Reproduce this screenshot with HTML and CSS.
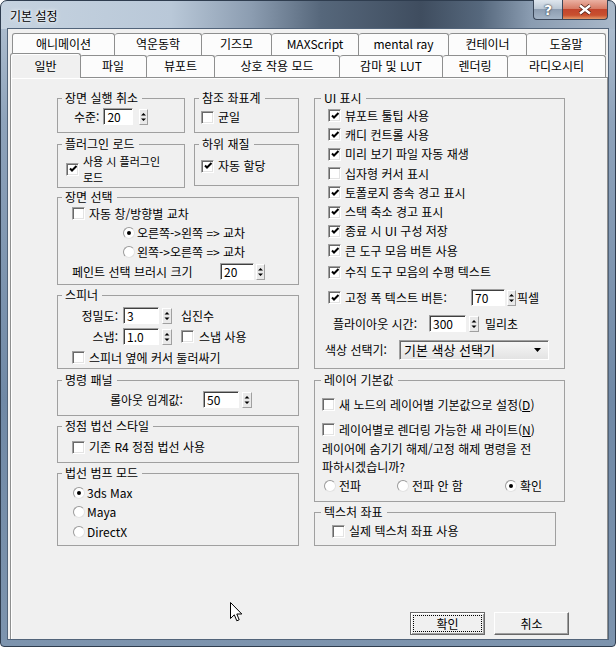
FILE: index.html
```html
<!DOCTYPE html>
<html lang="ko">
<head>
    <meta charset="UTF-8">
    <title>기본 설정</title>
    <link rel="stylesheet" href="styles.css">
</head>
<body>
<div class="window">
    <div class="titlebar">
        <span class="title">기본 설정</span>
        <div class="caption">
            <div class="cap-btn cap-help">?</div>
            <div class="cap-btn cap-close">
                <svg width="14" height="11" viewBox="0 0 14 11"><path d="M2 1.5 L12 9.5 M12 1.5 L2 9.5" stroke="#4a1d12" stroke-width="4"/><path d="M2 1.5 L12 9.5 M12 1.5 L2 9.5" stroke="#fff" stroke-width="2.4"/></svg>
            </div>
        </div>
    </div>

    <div class="client">
        <div class="tabs">
            <div class="tab-row row-back">
                <div class="tab">애니메이션</div>
                <div class="tab">역운동학</div>
                <div class="tab">기즈모</div>
                <div class="tab">MAXScript</div>
                <div class="tab">mental ray</div>
                <div class="tab">컨테이너</div>
                <div class="tab">도움말</div>
            </div>
            <div class="tab-row row-front">
                <div class="tab active">일반</div>
                <div class="tab">파일</div>
                <div class="tab">뷰포트</div>
                <div class="tab">상호 작용 모드</div>
                <div class="tab">감마 및 LUT</div>
                <div class="tab">렌더링</div>
                <div class="tab">라디오시티</div>
            </div>
        </div>

        <div class="page">
            <div class="cols">
                <!-- left column -->
                <div class="col col-left">
                    <div class="pair">
                        <div class="group g-undo">
                            <div class="group-title">장면 실행 취소</div>
                            <div class="line undo-row">
                                <span>수준:</span>
                                <span class="spin-box w30">20</span>
                                <span class="spin-arr"><svg width="7" height="14"><path d="M1 5.5 L3.5 3 L6 5.5Z M1 8.5 L3.5 11 L6 8.5Z"/></svg></span>
                            </div>
                        </div>
                        <div class="group g-ref">
                            <div class="group-title">참조 좌표계</div>
                            <div class="opt ref-row"><span class="cb"></span>균일</div>
                        </div>
                    </div>

                    <div class="pair pair-2">
                        <div class="group g-plugin">
                            <div class="group-title">플러그인 로드</div>
                            <div class="opt plugin-row">
                                <span class="cb"><svg width="9" height="9"><path d="M1 3.5 L3 5.5 L7.5 1" fill="none" stroke="#000" stroke-width="2"/></svg></span>
                                <span class="two-line">사용 시 플러그인<br>로드</span>
                            </div>
                        </div>
                        <div class="group g-submtl">
                            <div class="group-title">하위 재질</div>
                            <div class="opt submtl-row"><span class="cb"><svg width="9" height="9"><path d="M1 3.5 L3 5.5 L7.5 1" fill="none" stroke="#000" stroke-width="2"/></svg></span>자동 할당</div>
                        </div>
                    </div>

                    <div class="group g-select">
                        <div class="group-title">장면 선택</div>
                        <div class="opt sel-row pl14"><span class="cb"></span>자동 창/방향별 교차</div>
                        <div class="opt sel-row radio-row"><span class="rb on"></span>오른쪽-&gt;왼쪽 =&gt; 교차</div>
                        <div class="opt sel-row radio-row"><span class="rb"></span>왼쪽-&gt;오른쪽 =&gt; 교차</div>
                        <div class="line brush-row">
                            <span class="brush-label">페인트 선택 브러시 크기</span>
                            <span class="spin-box w34">20</span>
                            <span class="spin-arr"><svg width="7" height="14"><path d="M1 5.5 L3.5 3 L6 5.5Z M1 8.5 L3.5 11 L6 8.5Z"/></svg></span>
                        </div>
                    </div>

                    <div class="group g-spinner">
                        <div class="group-title">스피너</div>
                        <div class="line spinner-row first">
                            <span class="spin-label">정밀도:</span>
                            <span class="spin-box w36">3</span>
                            <span class="spin-arr wide"><svg width="8" height="14"><path d="M1.5 5.5 L4 3 L6.5 5.5Z M1.5 8.5 L4 11 L6.5 8.5Z"/></svg></span>
                            <span class="after">십진수</span>
                        </div>
                        <div class="line spinner-row">
                            <span class="spin-label">스냅:</span>
                            <span class="spin-box w36">1.0</span>
                            <span class="spin-arr wide"><svg width="8" height="14"><path d="M1.5 5.5 L4 3 L6.5 5.5Z M1.5 8.5 L4 11 L6.5 8.5Z"/></svg></span>
                            <span class="opt after"><span class="cb"></span>스냅 사용</span>
                        </div>
                        <div class="opt spinner-row pl14"><span class="cb"></span>스피너 옆에 커서 둘러싸기</div>
                    </div>

                    <div class="group g-cmd">
                        <div class="group-title">명령 패널</div>
                        <div class="line cmd-row">
                            <span class="cmd-label">롤아웃 임계값:</span>
                            <span class="spin-box w36">50</span>
                            <span class="spin-arr wide"><svg width="8" height="14"><path d="M1.5 5.5 L4 3 L6.5 5.5Z M1.5 8.5 L4 11 L6.5 8.5Z"/></svg></span>
                        </div>
                    </div>

                    <div class="group g-vnormal">
                        <div class="group-title">정점 법선 스타일</div>
                        <div class="opt vnormal-row pl14"><span class="cb"></span>기존 R4 정점 법선 사용</div>
                    </div>

                    <div class="group g-bump">
                        <div class="group-title">법선 범프 모드</div>
                        <div class="opt bump-row first"><span class="rb on"></span>3ds Max</div>
                        <div class="opt bump-row"><span class="rb"></span>Maya</div>
                        <div class="opt bump-row"><span class="rb"></span>DirectX</div>
                    </div>
                </div>

                <!-- right column -->
                <div class="col col-right">
                    <div class="group g-ui">
                        <div class="group-title">UI 표시</div>
                        <div class="ui-list">
                            <div class="opt ui-row"><span class="cb"><svg width="9" height="9"><path d="M1 3.5 L3 5.5 L7.5 1" fill="none" stroke="#000" stroke-width="2"/></svg></span>뷰포트 툴팁 사용</div>
                            <div class="opt ui-row"><span class="cb"><svg width="9" height="9"><path d="M1 3.5 L3 5.5 L7.5 1" fill="none" stroke="#000" stroke-width="2"/></svg></span>캐디 컨트롤 사용</div>
                            <div class="opt ui-row"><span class="cb"><svg width="9" height="9"><path d="M1 3.5 L3 5.5 L7.5 1" fill="none" stroke="#000" stroke-width="2"/></svg></span>미리 보기 파일 자동 재생</div>
                            <div class="opt ui-row"><span class="cb"></span>십자형 커서 표시</div>
                            <div class="opt ui-row"><span class="cb"><svg width="9" height="9"><path d="M1 3.5 L3 5.5 L7.5 1" fill="none" stroke="#000" stroke-width="2"/></svg></span>토폴로지 종속 경고 표시</div>
                            <div class="opt ui-row"><span class="cb"><svg width="9" height="9"><path d="M1 3.5 L3 5.5 L7.5 1" fill="none" stroke="#000" stroke-width="2"/></svg></span>스택 축소 경고 표시</div>
                            <div class="opt ui-row"><span class="cb"><svg width="9" height="9"><path d="M1 3.5 L3 5.5 L7.5 1" fill="none" stroke="#000" stroke-width="2"/></svg></span>종료 시 UI 구성 저장</div>
                            <div class="opt ui-row"><span class="cb"><svg width="9" height="9"><path d="M1 3.5 L3 5.5 L7.5 1" fill="none" stroke="#000" stroke-width="2"/></svg></span>큰 도구 모음 버튼 사용</div>
                            <div class="opt ui-row last"><span class="cb"><svg width="9" height="9"><path d="M1 3.5 L3 5.5 L7.5 1" fill="none" stroke="#000" stroke-width="2"/></svg></span>수직 도구 모음의 수평 텍스트</div>
                        </div>
                        <div class="line ui-wide fixed-row">
                            <span class="cb"><svg width="9" height="9"><path d="M1 3.5 L3 5.5 L7.5 1" fill="none" stroke="#000" stroke-width="2"/></svg></span>
                            <span class="fixed-label">고정 폭 텍스트 버튼:</span>
                            <span class="spin-box w34">70</span>
                            <span class="spin-arr"><svg width="7" height="14"><path d="M1 5.5 L3.5 3 L6 5.5Z M1 8.5 L3.5 11 L6 8.5Z"/></svg></span>
                            <span class="unit-px">픽셀</span>
                        </div>
                        <div class="line ui-wide flyout-row">
                            <span class="flyout-label">플라이아웃 시간:</span>
                            <span class="spin-box w37">300</span>
                            <span class="spin-arr wide"><svg width="8" height="14"><path d="M1.5 5.5 L4 3 L6.5 5.5Z M1.5 8.5 L4 11 L6.5 8.5Z"/></svg></span>
                            <span class="unit-ms">밀리초</span>
                        </div>
                        <div class="line ui-wide color-row">
                            <span class="color-label">색상 선택기:</span>
                            <div class="combo">
                                <span>기본 색상 선택기</span>
                                <svg class="combo-arrow" width="7" height="4"><path d="M0 0 H7 L3.5 4Z"/></svg>
                            </div>
                        </div>
                    </div>

                    <div class="group g-layer">
                        <div class="group-title">레이어 기본값</div>
                        <div class="opt layer-row first"><span class="cb"></span><span>새 노드의 레이어별 기본값으로 설정(<u>D</u>)</span></div>
                        <div class="opt layer-row"><span class="cb"></span><span>레이어별로 렌더링 가능한 새 라이트(<u>N</u>)</span></div>
                        <p class="layer-text">레이어에 숨기기 해제/고정 해제 명령을 전<br>파하시겠습니까?</p>
                        <div class="layer-radios">
                            <span class="opt r-prop"><span class="rb"></span>전파</span>
                            <span class="opt r-noprop"><span class="rb"></span>전파 안 함</span>
                            <span class="opt"><span class="rb on"></span>확인</span>
                        </div>
                    </div>

                    <div class="group g-tex">
                        <div class="group-title">텍스처 좌표</div>
                        <div class="opt tex-row"><span class="cb"></span>실제 텍스처 좌표 사용</div>
                    </div>
                </div>
            </div>

            <div class="buttons">
                <button class="btn btn-default"><span class="focus">확인</span></button>
                <button class="btn">취소</button>
            </div>
        </div>
    </div>

    <svg class="cursor" width="13" height="21" viewBox="0 0 13 21"><path d="M0.5 0.5 V16.5 L4.3 12.8 L6.8 18.8 L9.2 17.8 L6.8 12 H11.8 Z" fill="#fff" stroke="#000" stroke-linejoin="round"/></svg>
</div>
</body>
</html>
```

FILE: styles.css
```css
* {
  box-sizing: border-box;
}

body {
  margin: 0;
  font-family: "Noto Sans CJK KR", "Noto Sans", sans-serif;
  font-size: 12px;
  color: #000;
  background: #fff;
}

/* window frame */
.window {
  position: relative;
  width: 616px;
  height: 647px;
  display: flex;
  flex-direction: column;
  border: 1px solid #2f3d4f;
  border-radius: 7px 7px 4px 4px;
  padding: 0 6px 6px;
  background:
    linear-gradient(90deg, #c6d3e0 0, #b9c8d8 170px, #8c9db1 250px, #56677b 320px, #3f4d5f 420px, #56687d 480px, #8a9cb1 530px, #aab9ca 616px) top / 100% 28px no-repeat,
    linear-gradient(180deg, #b4c3d3 0, #8ea3bb 120px, #7089a6 400px, #7d94ae 100%);
}

.titlebar {
  height: 27px;
  display: flex;
  align-items: flex-start;
  padding-left: 3px;
}

.title {
  margin-top: 7px;
  line-height: 16px;
  text-shadow: 0 0 5px #fff, 0 0 3px #fff;
}

.caption {
  display: flex;
  margin: -1px 1px 0 auto;
}

.cap-btn {
  height: 20px;
  display: flex;
  align-items: center;
  justify-content: center;
  border: 1px solid #3a4658;
  border-top: none;
}

.cap-help {
  width: 29px;
  border-right: none;
  border-radius: 0 0 0 4px;
  background: linear-gradient(#dfe6ee, #bcc8d5 45%, #8d9db1 50%, #a4b4c6);
  color: #fff;
  font: bold 14px "DejaVu Sans", sans-serif;
  text-shadow: 0 0 2px #27313f, 0 0 1px #27313f;
}

.cap-close {
  width: 46px;
  border-radius: 0 0 4px 0;
  background: linear-gradient(#eab1a2, #d77c66 45%, #c2452c 50%, #c9502f 80%, #e39868);
}

.client {
  flex: 1;
  display: flex;
  flex-direction: column;
  border: 1px solid #52647a;
  background: #f0f0f0;
}

/* tabs */
.tabs {
  padding: 4px 0 0 4px;
}

.tab-row {
  display: flex;
  height: 22px;
}

.tab {
  flex: none;
  height: 22px;
  border: 1px solid #8e8f8f;
  border-left: none;
  border-bottom: none;
  border-radius: 3px 3px 0 0;
  background: #fcfcfc;
  text-align: center;
  line-height: 20px;
  white-space: nowrap;
}

.tab:first-child {
  border-left: 1px solid #8e8f8f;
}

.row-back .tab:nth-child(1) { width: 103px; }
.row-back .tab:nth-child(2) { width: 87px; }
.row-back .tab:nth-child(3) { width: 70px; }
.row-back .tab:nth-child(4) { width: 87px; }
.row-back .tab:nth-child(5) { width: 90px; }
.row-back .tab:nth-child(6) { width: 78px; }
.row-back .tab:nth-child(7) { width: 79px; }

.row-front .tab:nth-child(1) { width: 68px; }
.row-front .tab:nth-child(2) { width: 67px; }
.row-front .tab:nth-child(3) { width: 68px; }
.row-front .tab:nth-child(4) { width: 125px; }
.row-front .tab:nth-child(5) { width: 103px; }
.row-front .tab:nth-child(6) { width: 65px; }
.row-front .tab:nth-child(7) { width: 98px; }

.row-front .tab.active {
  position: relative;
  z-index: 1;
  width: 71px;
  height: 25px;
  margin: -2px -1px -1px -2px;
  background: #f0f0f0;
  box-shadow: inset 1px 1px #fff;
  line-height: 24px;
}

.page {
  flex: 1;
  display: flex;
  flex-direction: column;
  margin-left: 2px;
  border: 1px solid #8e8f8f;
  border-bottom: none;
  box-shadow: inset 1px 1px #fff;
  padding: 20px 38px 4px 46px;
}

.cols {
  display: flex;
  align-items: flex-start;
  gap: 15px;
}

.col-left { width: 242px; }
.col-right { width: 251px; }

/* group boxes */
.group {
  border: 1px solid #a0a0a0;
}

.group-title {
  width: fit-content;
  height: 14px;
  margin: -8px 0 0 4px;
  padding: 0 4px 0 3px;
  background: #f0f0f0;
  line-height: 14px;
  white-space: nowrap;
}

.col-right .group-title {
  margin-left: 6px;
}

.pair {
  display: flex;
  align-items: flex-start;
  gap: 9px;
}

.pair-2 { margin-top: 11px; }

.g-undo { width: 128px; height: 35px; }
.g-ref { width: 105px; height: 35px; }
.g-plugin { width: 128px; height: 44px; }
.g-submtl { width: 105px; height: 42px; }
.g-select { height: 88px; margin-top: 9px; }
.g-spinner { height: 74px; margin-top: 10px; }
.g-cmd { height: 36px; margin-top: 11px; }
.g-vnormal { height: 37px; margin-top: 10px; }
.g-bump { height: 73px; margin-top: 10px; }

.g-ui { height: 271px; }
.g-layer { height: 122px; margin-top: 11px; }
.g-tex { width: 242px; height: 34px; margin-top: 10px; }

/* controls */
.line {
  display: flex;
  align-items: center;
  white-space: nowrap;
}

.opt {
  display: flex;
  align-items: center;
  gap: 4px;
  white-space: nowrap;
  line-height: 14px;
}

.cb {
  flex: none;
  width: 13px;
  height: 13px;
  display: flex;
  align-items: center;
  justify-content: center;
  border: 1px solid;
  border-color: #a0a0a0 #fff #fff #a0a0a0;
  box-shadow: inset 1px 1px #696969, inset -1px -1px #e3e3e3;
  background: #fff;
}

.cb svg {
  margin: 1px 0 0 1px;
}

.rb {
  flex: none;
  position: relative;
  width: 12px;
  height: 12px;
  border-radius: 50%;
  border: 1px solid;
  border-color: #9a9a9a #e2e2e2 #e2e2e2 #9a9a9a;
  background: #fff;
  margin-right: -1px;
}

.rb.on::after {
  content: "";
  position: absolute;
  left: 3px;
  top: 3px;
  width: 4px;
  height: 4px;
  border-radius: 50%;
  background: #000;
}

.spin-box {
  flex: none;
  height: 17px;
  padding-left: 3px;
  line-height: 15px;
  border: 1px solid;
  border-color: #a0a0a0 #fff #fff #a0a0a0;
  box-shadow: inset 1px 1px #404040;
  background: #fff;
}

.w30 { width: 30px; }
.w34 { width: 34px; }
.w36 { width: 36px; }
.w37 { width: 37px; }

.spin-arr {
  flex: none;
  display: flex;
  width: 9px;
  height: 16px;
  margin-left: 2px;
  border: 1px solid;
  border-color: #fff #a0a0a0 #a0a0a0 #fff;
  background: #e9e9e9;
}

.spin-arr.wide {
  width: 10px;
  margin-left: 3px;
}

/* left column rows */
.undo-row {
  height: 17px;
  margin: 3px 0 0 16px;
  gap: 4px;
}

.ref-row {
  margin: 5px 0 0 6px;
}

.plugin-row {
  margin: 2px 0 0 8px;
}

.two-line {
  font-size: 11px;
  line-height: 16px;
}

.submtl-row {
  margin: 8px 0 0 6px;
}

.sel-row {
  height: 19px;
}

.pl14 { padding-left: 14px; }

.radio-row {
  padding-left: 65px;
  gap: 3px;
}

.brush-row {
  height: 17px;
  margin: 2px 0 0 14px;
}

.brush-label { width: 148px; }

.spinner-row {
  height: 21px;
}

.spinner-row.first { margin-top: 3px; }

.spin-label {
  width: 60px;
  margin-right: 5px;
  text-align: right;
}

.after { margin-left: 9px; }
.spinner-row .opt.after { gap: 5px; }

.cmd-row {
  height: 17px;
  margin: 4px 0 0 52px;
}

.cmd-label { width: 93px; }

.vnormal-row {
  margin-top: 7px;
}

.bump-row {
  height: 19.5px;
  padding-left: 15px;
  gap: 3px;
}

.bump-row.first { margin-top: 3px; }

/* right column rows */
.ui-list {
  margin-top: 1px;
}

.ui-row {
  height: 19.3px;
  padding-left: 13px;
}

.ui-row.last { margin-top: 2px; }

.ui-wide {
  height: 26px;
}

.fixed-row {
  margin-top: 3px;
  padding-left: 13px;
}

.fixed-label {
  width: 126px;
  margin-left: 4px;
}

.unit-px { margin-left: 1px; }

.flyout-row { padding-left: 18px; }
.flyout-label { width: 96px; }
.unit-ms { margin-left: 6px; }

.color-row { padding-left: 10px; }
.color-label { width: 74px; }

.combo {
  display: flex;
  align-items: center;
  width: 150px;
  height: 20px;
  padding-left: 4px;
  border: 1px solid;
  border-color: #a0a0a0 #fff #fff #a0a0a0;
  box-shadow: inset 1px 1px #696969;
  background: linear-gradient(#f7f7f7, #e3e3e3);
  font-size: 13px;
}

.combo-arrow {
  margin: 1px 7px 0 auto;
}

.layer-row {
  height: 19px;
  padding-left: 7px;
}

.layer-row.first { margin-top: 8px; }
.layer-row + .layer-row { margin-top: 6px; }

.layer-text {
  margin: 1px 0 0 7px;
  line-height: 17.5px;
  white-space: nowrap;
}

.layer-radios {
  display: flex;
  margin: 4px 0 0 9px;
}

.layer-radios .opt { gap: 4px; }
.r-prop { width: 73px; }
.r-noprop { width: 108px; }

.tex-row {
  margin: 5px 0 0 17px;
}

/* dialog buttons */
.buttons {
  display: flex;
  justify-content: flex-end;
  gap: 9px;
  margin-top: auto;
}

.btn {
  width: 75px;
  height: 23px;
  padding: 0;
  border: 1px solid;
  border-color: #fff #696969 #696969 #fff;
  box-shadow: inset -1px -1px #a0a0a0;
  background: #f0f0f0;
  font: inherit;
  color: #000;
}

.btn-default {
  border-color: #6b6b6b;
  box-shadow: inset 1px 1px #fff, inset -1px -1px #a0a0a0;
  padding: 2px;
}

.focus {
  display: block;
  height: 100%;
  border: 1px dotted #000;
  line-height: 15px;
}

.cursor {
  position: absolute;
  left: 229px;
  top: 601px;
}
```
